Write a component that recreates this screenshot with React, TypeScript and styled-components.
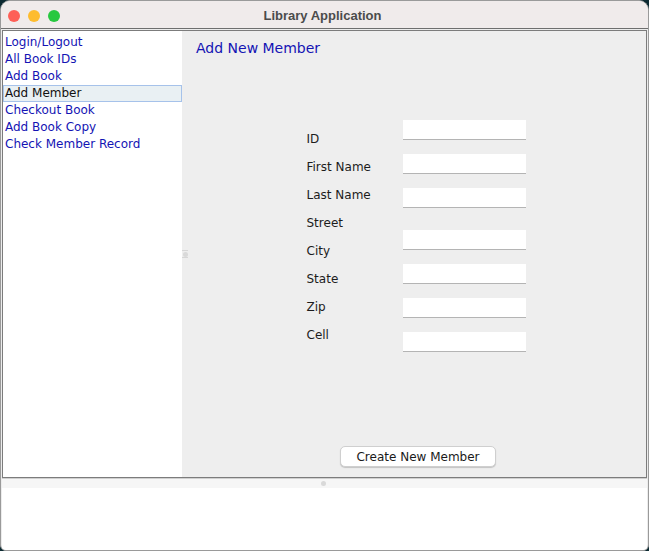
import React from "react";
import styled, { createGlobalStyle } from "styled-components";

const Global = createGlobalStyle`
  html, body { margin: 0; padding: 0; background: #0c2a32; }
  body { font-family: "DejaVu Sans", "Liberation Sans", sans-serif; }
  * { box-sizing: border-box; }
`;

const Window = styled.div`
  width: 649px;
  height: 551px;
  display: flex;
  flex-direction: column;
  background: #ececec;
  border: 1px solid #9a9a9a;
  border-radius: 10px 10px 6px 6px;
  overflow: hidden;
`;

const TitleBar = styled.div`
  height: 28px;
  flex: none;
  display: flex;
  align-items: center;
  padding-top: 2px;
  background: #f0ebeb;
  border-bottom: 1px solid #6e6e6e;
`;

const Lights = styled.div`
  display: flex;
  gap: 8px;
  padding-left: 7px;
`;

const Light = styled.span<{ $c: string }>`
  width: 12px;
  height: 12px;
  border-radius: 50%;
  background: ${(p) => p.$c};
`;

const Title = styled.div`
  flex: 1;
  text-align: center;
  margin-right: 63px;
  font-family: "Liberation Sans", "DejaVu Sans", sans-serif;
  font-size: 13px;
  font-weight: bold;
  color: #4b4b4b;
`;

const Body = styled.div`
  flex: 1;
  display: flex;
  flex-direction: column;
  padding: 1px 1px 0 1px;
`;

const SplitPane = styled.div`
  height: 448px;
  flex: none;
  display: flex;
  border: 1px solid #7c7c7c;
`;

const NavList = styled.div`
  width: 179px;
  flex: none;
  background: #ffffff;
  padding-top: 3px;
  display: flex;
  flex-direction: column;
`;

const NavItem = styled.div<{ $selected?: boolean }>`
  height: 17px;
  line-height: 15px;
  padding-left: 1px;
  font-size: 12px;
  white-space: nowrap;
  color: ${(p) => (p.$selected ? "#111111" : "#1414b4")};
  background: ${(p) => (p.$selected ? "#e9f0f3" : "transparent")};
  border: 1px solid ${(p) => (p.$selected ? "#a6c2ea" : "transparent")};
`;

const VDivider = styled.div`
  width: 6px;
  flex: none;
  background: #eeeeee;
  display: flex;
  align-items: center;
  justify-content: center;
`;

const VHandle = styled.span`
  width: 7px;
  height: 8px;
  border-top: 1px solid #d6d6d6;
  border-bottom: 1px solid #d6d6d6;
  display: flex;
  align-items: center;
  justify-content: center;
  &::after {
    content: "";
    width: 5px;
    height: 5px;
    border-radius: 50%;
    background: #d9d9d9;
  }
`;

const Panel = styled.div`
  flex: 1;
  background: #eeeeee;
  display: flex;
  flex-direction: column;
  padding: 8px 0 10px 8px;
`;

const Heading = styled.div`
  font-size: 14px;
  line-height: 18px;
  color: #1414b4;
`;

const Form = styled.div`
  align-self: center;
  margin-top: 63px;
  margin-right: 10px;
  display: flex;
`;

const LabelCol = styled.div`
  width: 96px;
  padding-top: 5px;
  display: flex;
  flex-direction: column;
`;

const Label = styled.div`
  height: 28px;
  line-height: 28px;
  font-size: 12px;
  color: #1c1c1c;
`;

const InputCol = styled.div`
  display: flex;
  flex-direction: column;
  gap: 14px;
`;

const Input = styled.input<{ $gapBefore?: boolean }>`
  width: 123px;
  height: 20px;
  margin: ${(p) => (p.$gapBefore ? "8px" : "0")} 0 0 0;
  border: none;
  border-bottom: 1px solid #b4b4b4;
  background: #ffffff;
  outline: none;
  padding: 0 4px;
  font: 12px "DejaVu Sans", sans-serif;
`;

const ButtonRow = styled.div`
  margin-top: auto;
  display: flex;
  justify-content: center;
  padding-right: 6px;
`;

const Button = styled.button`
  width: 156px;
  height: 21px;
  background: #ffffff;
  border: 1px solid #cfcfcf;
  border-radius: 5px;
  box-shadow: 0 1px 1px rgba(0, 0, 0, 0.18);
  font: 12px "DejaVu Sans", sans-serif;
  color: #1a1a1a;
  padding: 0;
`;

const HDivider = styled.div`
  height: 10px;
  flex: none;
  background: #f6f6f6;
  border-top: 1px solid #d0d0d0;
  display: flex;
  align-items: center;
  justify-content: center;
  padding-right: 2px;
  &::after {
    content: "";
    width: 5px;
    height: 5px;
    border-radius: 50%;
    background: #d9d9d9;
  }
`;

const BottomPane = styled.div`
  flex: 1;
  background: #ffffff;
`;

const navItems = [
  "Login/Logout",
  "All Book IDs",
  "Add Book",
  "Add Member",
  "Checkout Book",
  "Add Book Copy",
  "Check Member Record",
];

const labels = ["ID", "First Name", "Last Name", "Street", "City", "State", "Zip", "Cell"];
const inputs = ["ID", "First Name", "Last Name", "City", "State", "Zip", "Cell"];

export default function App() {
  return (
    <>
      <Global />
      <Window>
        <TitleBar>
          <Lights>
            <Light $c="#fe5f57" />
            <Light $c="#febc2e" />
            <Light $c="#28c840" />
          </Lights>
          <Title>Library Application</Title>
        </TitleBar>
        <Body>
          <SplitPane>
            <NavList>
              {navItems.map((n) => (
                <NavItem key={n} $selected={n === "Add Member"}>
                  {n}
                </NavItem>
              ))}
            </NavList>
            <VDivider>
              <VHandle />
            </VDivider>
            <Panel>
              <Heading>Add New Member</Heading>
              <Form>
                <LabelCol>
                  {labels.map((l) => (
                    <Label key={l}>{l}</Label>
                  ))}
                </LabelCol>
                <InputCol>
                  {inputs.map((i) => (
                    <Input key={i} aria-label={i} $gapBefore={i === "City"} />
                  ))}
                </InputCol>
              </Form>
              <ButtonRow>
                <Button>Create New Member</Button>
              </ButtonRow>
            </Panel>
          </SplitPane>
          <HDivider />
          <BottomPane />
        </Body>
      </Window>
    </>
  );
}
